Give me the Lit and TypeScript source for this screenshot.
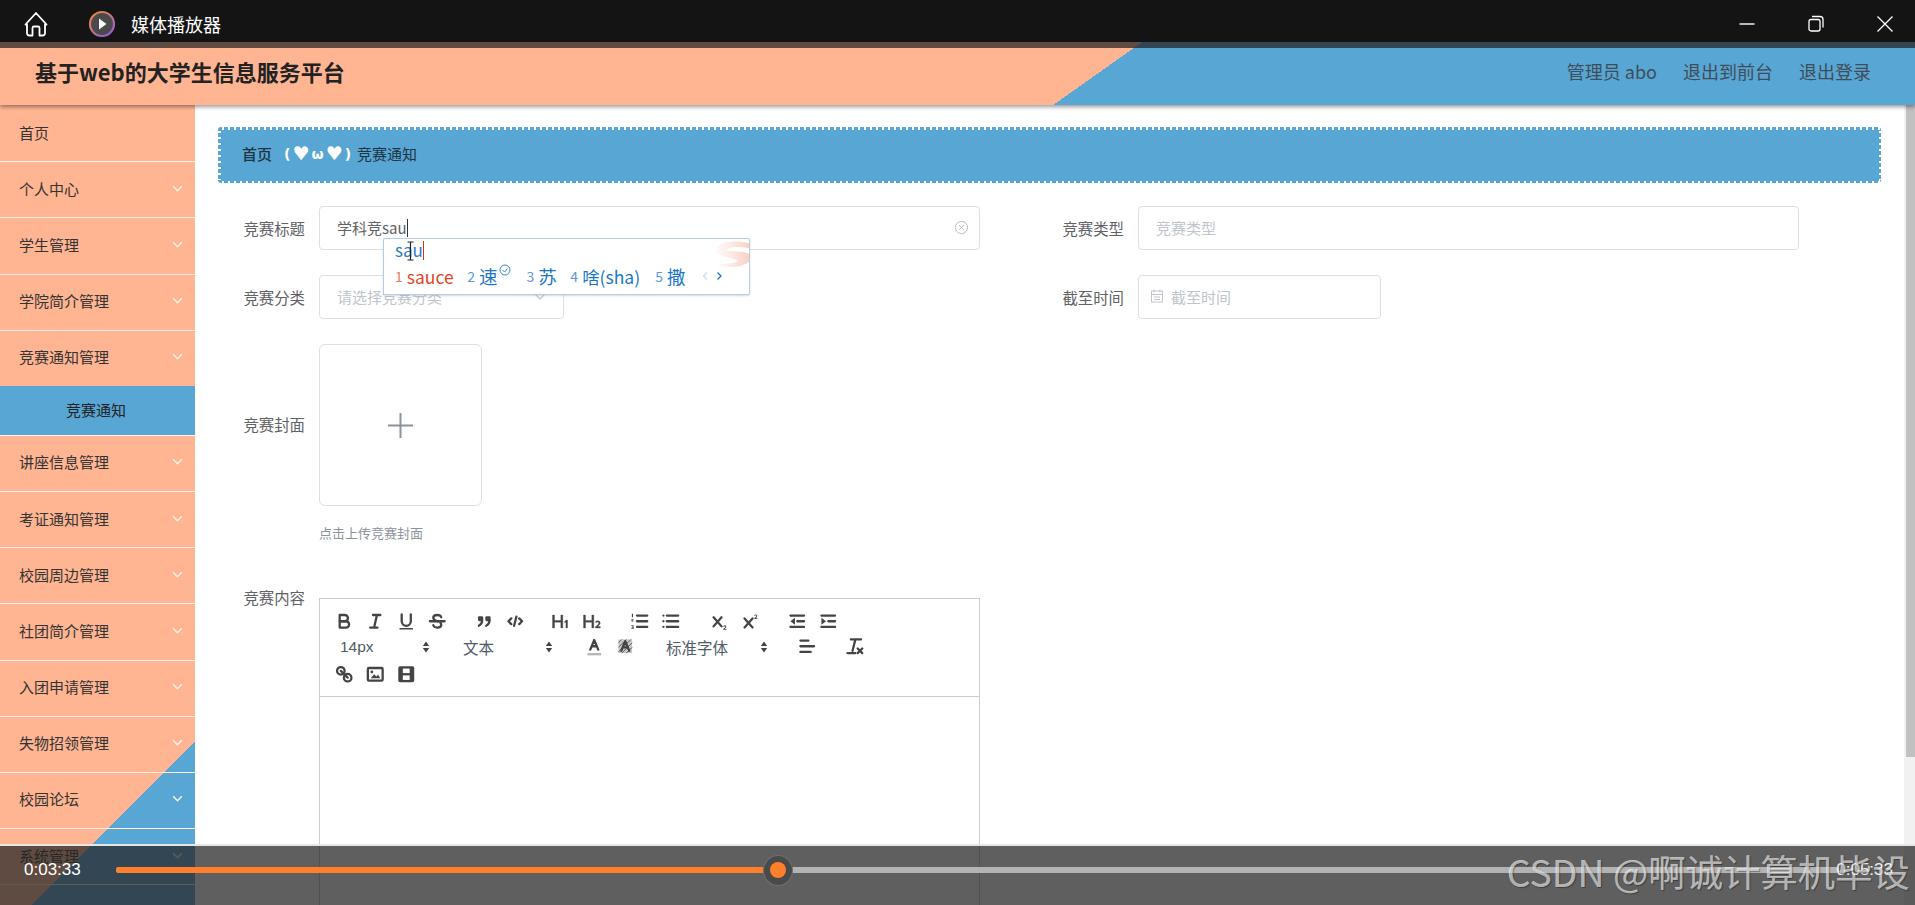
import { LitElement, html, css, svg } from "lit";
import { customElement } from "lit/decorators.js";

const chevron = html`<svg class="chev" viewBox="0 0 12 12"><path d="M2 4l4 4 4-4" fill="none" stroke="currentColor" stroke-width="1.300"/></svg>`;

const menuA: [string, boolean][] = [
  ["首页", false],
  ["个人中心", true],
  ["学生管理", true],
  ["学院简介管理", true],
  ["竞赛通知管理", true],
];
const menuB = ["讲座信息管理", "考证通知管理", "校园周边管理", "社团简介管理", "入团申请管理", "失物招领管理", "校园论坛", "系统管理"];

const q = (body: unknown, cls = "", size = 20.5) =>
  html`<span class="tb ${cls}"><svg viewBox="0 0 18 18" width=${size} height=${size}>${body}</svg></span>`;

const icons: Record<string, unknown> = {
  bold: svg`<path class="s" d="M5 3.500h4.500a2.700 2.700 0 0 1 0 5.500H5z"/><path class="s" d="M5 9h5.500a2.700 2.700 0 0 1 0 5.500H5z"/>`,
  italic: svg`<path class="s" d="M7 3.500h6.500M4.500 14.500H11M8 14.500l2.500-11"/>`,
  underline: svg`<path class="s" d="M5 3v6a4 4 0 0 0 8 0V3"/><rect class="f" x="3" y="15" width="12" height="1.200" rx=".5"/>`,
  strike: svg`<path class="t" d="M2.500 9h13"/><path class="s" d="M12.500 5.500C12 4 10.500 3.500 9 3.500 7 3.500 5.500 4.500 5.500 6c0 1 .8 2 3.500 3M5.500 12.500C6 14 7.500 14.500 9 14.500c2 0 3.500-1 3.500-2.500 0-.7-.2-1.300-.8-1.800"/>`,
  quote: svg`<rect class="f" x="3.500" y="4.500" width="4.500" height="4.500" rx="1"/><rect class="f" x="10" y="4.500" width="4.500" height="4.500" rx="1"/><path class="s" d="M7.200 8c0 2.500-1 4-3 5M13.700 8c0 2.500-1 4-3 5"/>`,
  code: svg`<path class="s" d="M5.500 6.500L3 9l2.500 2.500M12.500 6.500L15 9l-2.500 2.500M10 5L8 13"/>`,
  h1: svg`<path class="fb" d="M2 4h1.500v4.200h5V4H10v10H8.500V9.500h-5V14H2zM12.500 14v-4.700l-1 .7v-1.100l1.300-1h.9V14z"/>`,
  h2: svg`<path class="fb" d="M2 4h1.500v4.200h5V4H10v10H8.500V9.500h-5V14H2zM11.300 14v-.9c1.600-1.400 2.600-2.200 2.600-3 0-.5-.4-.8-.9-.8-.5 0-.9.300-1.200.7l-.6-.7c.5-.6 1.100-.9 1.900-.9 1.100 0 1.900.7 1.900 1.700 0 1-.9 1.900-2.100 2.900h2.200v1z"/>`,
  ol: svg`<path class="t" d="M7 4h9M7 9h9M7 14h9"/><path class="f" d="M2.500 2.500h1v3h-1zM2 7.200h2v.8l-1 .7h1v.6H2v-.7l1-.8H2zM2 12.500h2v3.200H2v-.6h1.200v-.7H2.300v-.5h.9v-.8H2z"/>`,
  ul: svg`<path class="t" d="M6 4h10M6 9h10M6 14h10"/><path class="t" d="M3 4h.01M3 9h.01M3 14h.01"/>`,
  sub: svg`<path class="s" d="M4 5.500l7 8M11 5.500l-7 8"/><path class="f" d="M12.500 16.500v-.7c1.100-.9 1.900-1.500 1.900-2 0-.3-.3-.5-.6-.5-.4 0-.6.200-.9.500l-.5-.5c.4-.5.800-.7 1.400-.7.800 0 1.400.5 1.400 1.200 0 .7-.6 1.300-1.500 2h1.600v.7z"/>`,
  sup: svg`<path class="s" d="M4 6.500l7 8M11 6.500l-7 8"/><path class="f" d="M12.500 7v-.7c1.100-.9 1.900-1.500 1.900-2 0-.3-.3-.5-.6-.5-.4 0-.6.200-.9.500l-.5-.5c.4-.5.800-.7 1.400-.7.800 0 1.400.5 1.400 1.200 0 .7-.6 1.300-1.500 2h1.600V7z"/>`,
  outdent: svg`<path class="t" d="M3 4h12M3 14h12M9 9h6"/><path class="f" d="M7 6v6L3 9z"/>`,
  indent: svg`<path class="t" d="M3 4h12M3 14h12M9 9h6"/><path class="f" d="M3 6v6l4-3z"/>`,
  color: svg`<path class="s" d="M5.500 12L9 3.500 12.500 12M7 9h4"/><rect x="3" y="15" width="12" height="2" fill="#b5b5b5"/>`,
  background: svg`<rect x="3" y="3" width="12" height="12" fill="#c9c9c9"/><path d="M3 6L6 3M3 10L10 3M3 14L14 3M6 15L15 6M10 15L15 10" stroke="#555" stroke-width=".8" fill="none"/><path class="s" d="M5.500 13L9 4.500 12.500 13M7 10h4"/>`,
  align: svg`<path class="t" d="M3 4h7M3 9h12M3 14h9"/>`,
  clean: svg`<path class="s" d="M6 3h9M10 3l-2.500 10M3 15h7"/><path class="t" d="M12 11l4 4M16 11l-4 4"/>`,
  link: svg`<circle class="s" cx="6" cy="6" r="3.300"/><circle class="s" cx="12" cy="12" r="3.300"/><path class="t" d="M6 6l6 6"/>`,
  image: svg`<rect class="s" x="2.500" y="3.500" width="13" height="11" rx="1"/><path class="f" d="M5 12.500l3-3.500 2 2 1.500-1.500 2 3z"/><circle class="f" cx="6" cy="7" r="1.200"/>`,
  video: svg`<rect class="f" x="2" y="2" width="14" height="14" rx="1.500"/><rect x="6" y="4" width="6" height="4" fill="#fff"/><rect x="6" y="10" width="6" height="4" fill="#fff"/>`,
};

const picker = (text: string, cls: string) => html`<span class="picker ${cls}"><span>${text}</span>
  <svg class="updown" viewBox="0 0 8 12" width="8" height="12"><path d="M4 .500l3.200 4.500H.8zM4 11.500L.8 7h6.400z" fill="#444"/></svg></span>`;

@customElement("app-root")
export class AppRoot extends LitElement {
  static styles = css`
    :host { display: block; width: 1915px; height: 905px; overflow: hidden; position: relative; background: #fff;
      font-family: "Noto Sans CJK SC", "Noto Sans", sans-serif; }
    * { box-sizing: border-box; }
    .titlebar { height: 42px; background: #141414; display: flex; align-items: center; color: #fff; padding: 6px 0 0 22px; }
    .home { width: 28px; height: 28px; margin-right: 38px; }
    .appicon { width: 28px; height: 28px; margin-right: 15px; }
    .appname { font-size: 18px; flex: 1; }
    .winbtn { width: 61px; height: 36px; display: flex; align-items: center; justify-content: center; }
    .winbtn svg { width: 18px; height: 18px; }
    .winbtn.mid { width: 77px; }
    .header { height: 63px; padding: 0 44px 5px 35px; display: flex; align-items: center; justify-content: space-between;
      background: linear-gradient(324.7deg, #58a6d4 498px, #ffb592 498px);
      box-shadow: 0 2px 4px rgba(0,0,0,.4); position: relative; z-index: 2; }
    .strip { position: absolute; left: 0; right: 0; top: 0; height: 6px; background: rgba(36,36,36,.73); }
    .brand { font-size: 22px; font-weight: 700; color: #222; }
    .links { display: flex; gap: 26px; font-size: 18px; color: #3f4d59; }
    .main { display: flex; height: 800px; }
    .side { width: 195px; flex: none; padding-top: 1px; background: linear-gradient(315deg, #58a6d4 115.300px, #ffb592 115.300px); overflow: hidden; }
    .item { height: 56.200px; display: flex; align-items: center; justify-content: space-between; padding: 0 11px 3px 19px;
      font-size: 15px; color: #333; border-bottom: 1.500px solid #fff0e8; }
    .item.open { border-bottom: none; height: 55px; }
    .chev { width: 13px; height: 13px; color: #fff3ed; }
    .subitem { height: 50px; background: #58a6d4; font-size: 15px; color: #222; display: flex; align-items: center; justify-content: center;
      padding: 0 3px 2px 0; border-bottom: 1.500px solid #fff0e8; }
    .content { flex: 1; min-width: 0; padding: 22px 23px 0; overflow: hidden; }
    .crumb { height: 56px; border-radius: 3px; display: flex; align-items: center; padding: 0 0 3px 24px; font-size: 15px; color: #1f3442;
      background:
        linear-gradient(#58a6d4, #58a6d4) center / calc(100% - 5px) calc(100% - 5px) no-repeat,
        repeating-linear-gradient(90deg, #58a6d4 0 4px, #fff 4px 6px) top / 100% 3px no-repeat,
        repeating-linear-gradient(90deg, #58a6d4 0 4px, #fff 4px 6px) bottom / 100% 3px no-repeat,
        repeating-linear-gradient(180deg, #58a6d4 0 4px, #fff 4px 6px) left / 3px 100% no-repeat,
        repeating-linear-gradient(180deg, #58a6d4 0 4px, #fff 4px 6px) right / 3px 100% no-repeat; }
    .crumb b { font-weight: 500; }
    .kao { color: #fff; font-family: "DejaVu Sans", sans-serif; font-weight: 700; font-size: 14px; margin: 0 6px 0 12px; white-space: nowrap; display: flex; align-items: center; gap: 1px; }
    .heart { font-size: 19px; line-height: 1; margin: 0 1px; }
    .cols { display: grid; grid-template-columns: 819px 1fr; margin-top: 23px; }
    .field { display: flex; align-items: center; height: 44px; margin-bottom: 24px; }
    .field.first { margin-bottom: 25px; }
    .lbl { width: 87px; margin-right: 14px; text-align: right; font-size: 15.400px; color: #606266; flex: none; }
    .field .lbl { padding-bottom: 1px; }
    .input { height: 44px; border: 1px solid #dcdfe6; border-radius: 4px; background: #fff; display: flex; align-items: center; padding: 0 17px 2px; font-size: 15px; color: #606266; position: relative; }
    .w1 { width: 661px; justify-content: space-between; padding-right: 10px; }
    .w2 { width: 245px; justify-content: space-between; padding-right: 16px; }
    .w3 { width: 243px; padding-left: 10px; gap: 6px; }
    .ph { color: #c0c4cc; }
    .caret { display: inline-block; width: 1px; height: 18px; background: #333; vertical-align: -3px; }
    .clear { width: 15px; height: 15px; }
    .cal { width: 16px; height: 16px; }
    .selarrow { width: 14px; height: 14px; }
    .uprow { display: flex; align-items: center; margin-top: 1px; }
    .uprow .lbl { padding-bottom: 3px; }
    .upload { width: 163px; height: 162px; border: 1px solid #dcdfe6; border-radius: 6px; display: flex; align-items: center; justify-content: center; }
    .upload svg { width: 27px; height: 27px; }
    .hint { margin: 17px 0 0 101px; font-size: 13px; color: #8c939d; line-height: 20px; }
    .edrow { display: flex; margin-top: 55px; }
    .edrow .lbl { line-height: 22px; margin-top: -12px; }
    .editor { width: 661px; height: 320px; border: 1px solid #ccc; flex: none; }
    .toolbar { height: 98px; border-bottom: 1px solid #ccc; padding: 10px 0 0 9px; color: #444; font-family: "Liberation Sans", "Noto Sans CJK SC", sans-serif; }
    .tr { display: flex; align-items: center; height: 25px; }
    .tr.r3 { height: 29px; margin-top: 1px; }
    .tb { width: 31px; height: 25px; flex: none; display: flex; align-items: center; justify-content: center; }
    .g { margin-left: 16px; }
    .g15 { margin-left: 15px; }
    .g18 { margin-left: 18px; }
    .s { fill: none; stroke: #444; stroke-width: 2; stroke-linecap: round; stroke-linejoin: round; }
    .t { fill: none; stroke: #444; stroke-width: 2; stroke-linecap: round; }
    .f { fill: #444; }
    .fb { fill: #444; stroke: #444; stroke-width: .3; }
    .picker { width: 107px; flex: none; display: flex; align-items: center; justify-content: space-between; padding: 0 8px 0 9px; font-size: 15.500px; color: #4f5b66; }
    .picker.wide { width: 119px; }
    .pk1 { margin-left: 2px; }
    .pk2 { margin-left: 16px; }
    .scroll { width: 11px; flex: none; background: #f1f1f1; display: flex; justify-content: flex-end; }
    .thumb { width: 9px; height: 652px; background: #c1c1c1; }
    .ime { position: absolute; left: 383px; top: 238px; width: 367px; height: 57px; background: #fff; border: 1px solid #b7cde3; border-radius: 2px;
      box-shadow: 0 1px 2px rgba(120,150,190,.35); z-index: 3; padding: 0 0 0 11px; overflow: hidden; color: #2d7dc9; }
    .logo { position: absolute; right: 0; top: 0; width: 38px; height: 32px; }
    .imetop { height: 23px; font-size: 17px; line-height: 22px; position: relative; }
    .imecaret { display: inline-block; width: 1px; height: 19px; background: #d0301a; vertical-align: -3px; }
    .ibeam { position: absolute; left: 10.500px; top: 2px; width: 9px; height: 20px; }
    .cands { display: flex; align-items: center; height: 28px; font-size: 17.500px; color: #1b76c8; white-space: nowrap; position: relative; }
    .cands i { font-style: normal; font-size: 14px; color: #5c97d6; margin-right: 4px; }
    .cj { font-size: 18.500px; }
    .c { display: flex; align-items: center; margin-right: 15px; }
    .c.red { color: #e2451f; margin-right: 13.600px; }
    .c.red i { color: #ea7b5e; }
    .c.m1 { margin-right: 16px; }
    .c.m2 { margin-right: 13.500px; }
    .tick { width: 12px; height: 12px; margin: -12px 0 0 1px; }
    .pager { width: 24px; height: 14px; }
    .player { position: absolute; left: 0; right: 0; bottom: 0; height: 61px; border-top: 2px solid #e6e6e6; background: rgba(36,36,36,.73); background-clip: padding-box; z-index: 4;
      display: flex; align-items: center; padding: 0 22px 11px 24px; color: #fff; font-family: "Liberation Sans", sans-serif; font-size: 17px; }
    .time { flex: none; width: 92px; }
    .track { width: 1723px; height: 6px; flex: none; margin-right: -1700px; display: flex; align-items: center; background: #b3b3b3; border-radius: 3px; }
    .played { width: 661px; height: 6px; background: #ff7f2a; border-radius: 3px 0 0 3px; }
    .knob { width: 30px; height: 31px; border-radius: 50%; background: #4a4a4a; border: 1px solid #6f6f6f; display: flex; align-items: center; justify-content: center; flex: none; margin-left: -14px; }
    .knob::after { content: ""; width: 16px; height: 16px; border-radius: 50%; background: #ff7f2a; }
    .time.end { margin-left: auto; width: auto; opacity: .9; }
    .wm { position: absolute; right: 5px; bottom: 6px; z-index: 5; font-size: 37.400px; line-height: 56px; color: rgba(255,255,255,.62); white-space: nowrap; text-shadow: 1px 1px 1px rgba(0,0,0,.35); font-family: "Noto Sans CJK SC", sans-serif; font-weight: 400; }
  `;

  render() {
    return html`
      <div class="titlebar">
        <svg class="home" viewBox="0 0 28 28" fill="none" stroke="#fff" stroke-width="1.800" stroke-linejoin="round"><path d="M3.500 14.500L14 3l10.500 11.500H23V23a2.500 2.500 0 0 1-2.500 2.500H17.500V18a1.500 1.500 0 0 0-1.500-1.500h-4a1.500 1.500 0 0 0-1.500 1.500v7.500H7.500A2.500 2.500 0 0 1 5 23v-8.500z"/></svg>
        <svg class="appicon" viewBox="0 0 28 28"><defs><linearGradient id="rg" x1="0" y1="0" x2="0.700" y2="1"><stop offset="0" stop-color="#f28a2e"/><stop offset="1" stop-color="#9a5fd0"/></linearGradient></defs><circle cx="14" cy="14" r="12" fill="#4a4a4a" stroke="url(#rg)" stroke-width="2.200"/><path d="M11 8.500l7.500 5.500-7.500 5.500z" fill="#fff"/></svg>
        <span class="appname">媒体播放器</span>
        <span class="winbtn"><svg viewBox="0 0 18 18"><path d="M1.500 9h15" stroke="#fff" stroke-width="1.400"/></svg></span>
        <span class="winbtn mid"><svg viewBox="0 0 18 18" fill="none" stroke="#fff" stroke-width="1.300"><rect x="2" y="4.500" width="11" height="11.500" rx="2"/><path d="M5 1.500h8a3 3 0 0 1 3 3v8"/></svg></span>
        <span class="winbtn"><svg viewBox="0 0 18 18"><path d="M1.500 1.500l15 15M16.500 1.500l-15 15" stroke="#fff" stroke-width="1.300"/></svg></span>
      </div>
      <div class="header">
        <div class="strip"></div>
        <div class="brand">基于web的大学生信息服务平台</div>
        <div class="links"><span>管理员 abo</span><span>退出到前台</span><span>退出登录</span></div>
      </div>
      <div class="main">
        <nav class="side">
          ${menuA.map(([t, c], i) => html`<div class="item ${i === 4 ? "open" : ""}"><span>${t}</span>${c ? chevron : ""}</div>`)}
          <div class="subitem">竞赛通知</div>
          ${menuB.map((t) => html`<div class="item"><span>${t}</span>${chevron}</div>`)}
        </nav>
        <section class="content">
          <div class="crumb"><b>首页</b><span class="kao">(<span class="heart">♥</span>ω<span class="heart">♥</span>)</span><span>竞赛通知</span></div>
          <div class="cols">
            <div class="field first"><span class="lbl">竞赛标题</span>
              <div class="input w1"><span>学科竞sau<span class="caret"></span></span>
                <svg class="clear" viewBox="0 0 16 16" fill="none" stroke="#b4b8c0" stroke-width="1"><circle cx="8" cy="8" r="6.500"/><path d="M5.500 5.500l5 5M10.500 5.500l-5 5"/></svg></div></div>
            <div class="field first"><span class="lbl">竞赛类型</span><div class="input w1"><span class="ph">竞赛类型</span></div></div>
            <div class="field"><span class="lbl">竞赛分类</span>
              <div class="input w2"><span class="ph">请选择竞赛分类</span>
                <svg class="selarrow" viewBox="0 0 14 14" fill="none" stroke="#c0c4cc" stroke-width="1.200"><path d="M2 5l5 5 5-5"/></svg></div></div>
            <div class="field"><span class="lbl">截至时间</span>
              <div class="input w3"><svg class="cal" viewBox="0 0 16 16" fill="none" stroke="#c0c4cc" stroke-width="1"><rect x="2.500" y="3" width="11" height="11"/><path d="M2.500 6.500h11M5 1.500v3M11 1.500v3M5 9h6M5 11.500h6"/></svg><span class="ph">截至时间</span></div></div>
          </div>
          <div class="uprow"><span class="lbl">竞赛封面</span>
            <div class="upload"><svg viewBox="0 0 27 27"><path d="M13.500 1v25M1 13.500h25" stroke="#8c939d" stroke-width="2"/></svg></div></div>
          <div class="hint">点击上传竞赛封面</div>
          <div class="edrow"><span class="lbl">竞赛内容</span>
            <div class="editor"><div class="toolbar">
              <div class="tr">${q(icons.bold)}${q(icons.italic)}${q(icons.underline)}${q(icons.strike)}
                ${q(icons.quote, "g")}${q(icons.code)}
                ${q(icons.h1, "g15", 23)}${q(icons.h2, "", 23)}
                ${q(icons.ol, "g")}${q(icons.ul)}
                ${q(icons.sub, "g18")}${q(icons.sup)}
                ${q(icons.outdent, "g")}${q(icons.indent)}
              </div>
              <div class="tr">${picker("14px", "pk1")}${picker("文本", "pk2")}
                ${q(icons.color, "g18")}${q(icons.background)}
                ${picker("标准字体", "wide pk2")}
                ${q(icons.align, "g")}
                ${q(icons.clean, "g")}
              </div>
              <div class="tr r3">${q(icons.link)}${q(icons.image)}${q(icons.video)}</div>
            </div></div>
          </div>
        </section>
        <div class="scroll"><div class="thumb"></div></div>
      </div>
      <div class="ime">
        <svg class="logo" viewBox="0 0 40 32"><defs><linearGradient id="sg" x1="0" y1="0" x2="1" y2="0"><stop offset="0" stop-color="#f6a58a" stop-opacity=".05"/><stop offset="1" stop-color="#f07a52" stop-opacity=".35"/></linearGradient></defs><path d="M6 8C12 2 26 0 40 4v5C28 6 18 8 16 11c6 2 18 0 24 4v8C32 30 14 30 4 25c8 1 22 0 24-3C22 18 0 17 6 8z" fill="url(#sg)"/></svg>
        <div class="imetop">sau<span class="imecaret"></span>
          <svg class="ibeam" viewBox="0 0 9 20" fill="none" stroke="#222" stroke-width="1.200"><path d="M1.500 1h6M1.500 19h6M4.500 1v18"/></svg></div>
        <div class="cands">
          <span class="c red"><i>1</i>sauce</span>
          <span class="c m1"><i>2</i><span class="cj">速</span><svg class="tick" viewBox="0 0 12 12" fill="none" stroke="#3a86d2" stroke-width="1"><circle cx="6" cy="6" r="5"/><path d="M3.500 6l2 2 3-3.500"/></svg></span>
          <span class="c m2"><i>3</i><span class="cj">苏</span></span>
          <span class="c"><i>4</i>啥(sha)</span>
          <span class="c m1"><i>5</i><span class="cj">撒</span></span>
          <svg class="pager" viewBox="0 0 24 14" fill="none" stroke-width="1.300"><path d="M6 3.500L2.500 7 6 10.500" stroke="#cfdbe8"/><path d="M16.500 3.500L20 7l-3.500 3.500" stroke="#1f74c8"/></svg>
        </div>
      </div>
      <div class="player">
        <span class="time">0:03:33</span>
        <div class="track"><div class="played"></div><div class="knob"></div></div>
        <span class="time end">0:05:33</span>
      </div>
      <div class="wm">CSDN @啊诚计算机毕设</div>
    `;
  }
}
